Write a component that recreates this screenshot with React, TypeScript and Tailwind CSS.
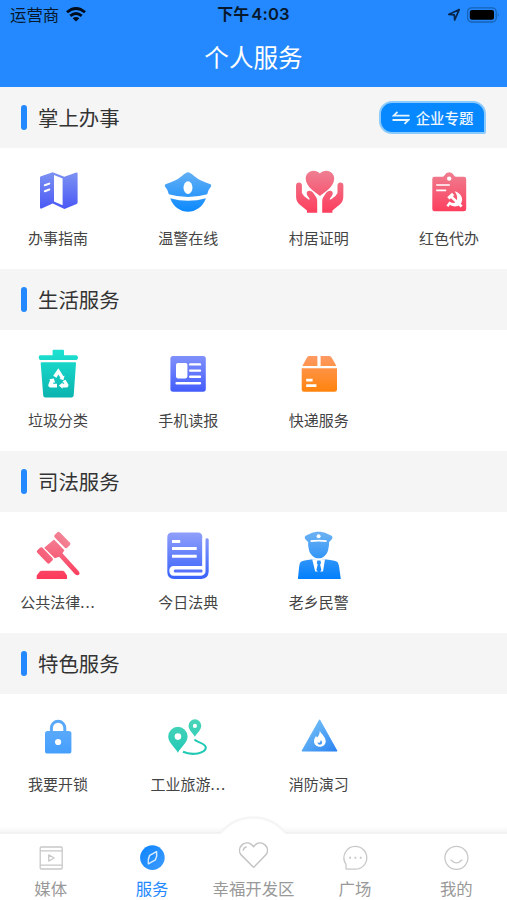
import React from "react";

type IconProps = {
  id: string;
  from: string;
  to: string;
  children: React.ReactNode;
};

// 48x48 tile icon, shapes inherit the vertical gradient fill
const Icon: React.FC<IconProps> = ({ id, from, to, children }) => (
  <svg viewBox="0 0 48 48" className="w-12 h-12 overflow-visible" fill={`url(#${id})`}>
    <defs>
      <linearGradient id={id} gradientUnits="userSpaceOnUse" x1="0" y1="2" x2="0" y2="46">
        <stop offset="0" stopColor={from} />
        <stop offset="1" stopColor={to} />
      </linearGradient>
    </defs>
    {children}
  </svg>
);

const GuideIcon = () => (
  <Icon id="guide" from="#8096f2" to="#4350f5">
    <path d="M7 8.3 18.7 4.3 30.3 8.7 42.3 4.6Q43.6 4.3 43.6 5.6V34.6Q43.6 35.6 42.6 36L30.5 41 18.7 35.5 7.6 40.6Q6 41 6 39.6V9.6Q6 8.6 7 8.3Z" />
    <path d="M20 7 28.6 10.4V37.2L20 33.4Z" fill="#fff" />
    <path d="M10.8 17.3 15.3 15.6M10.8 23.2 15.3 21.5" stroke="#fff" strokeWidth="2" strokeLinecap="round" />
  </Icon>
);

const PoliceCapIcon = () => (
  <Icon id="cap" from="#68b2f3" to="#0787ff">
    <path d="M24 4.3C27 4.5 31 9.5 36 12Q41 14.4 46.5 16.3Q47.8 17 47 18.6Q44 22 43.2 26.2Q24 31.8 4.8 26.2Q4 22 1 18.6Q.2 17 1.5 16.3Q7 14.4 12 12C17 9.5 21 4.5 24 4.3Z" />
    <path d="M6.2 30.2Q24 35.2 42 30.2C39 39 31 43.8 24 43.8S9 39 6.2 30.2Z" />
    <ellipse cx="24" cy="19.6" rx="4.5" ry="6.3" fill="#fff" />
  </Icon>
);

const HeartHandsIcon = () => (
  <Icon id="hands" from="#ee8093" to="#fd3c5c">
    <path d="M25 28C22 25 10.7 19.5 10.7 10.5C10.7 3 20 .2 24.9 5.5C29.8.2 39.2 3 39.2 10.5C39.2 19.5 28 25 25 28Z" />
    <path d="M1 17Q1.2 14.3 4 14.5Q6.9 14.8 6.9 17.5V25Q8.4 28 11.5 30L13.6 31.4Q15.4 32 14.4 30.4L12 27Q10.8 23.4 14 22.8Q16.4 22.6 18 24.6L21.2 29.3Q22.2 31 22.2 33V44.7H12V42.6L4.6 36.6Q1.2 33.8 1.1 29Z" />
    <path d="M48.4 17Q48.2 14.3 45.4 14.5Q42.5 14.8 42.5 17.5V25Q41 28 37.9 30L35.8 31.4Q34 32 35 30.4L37.4 27Q38.6 23.4 35.4 22.8Q33 22.6 31.4 24.6L28.2 29.3Q27.2 31 27.2 33V44.7H37.4V42.6L44.8 36.6Q48.2 33.8 48.3 29Z" />
  </Icon>
);

const PartyBoardIcon = () => (
  <Icon id="board" from="#ee8293" to="#fd3b5b">
    <path d="M9.5 8.7H17.5Q19.3 8.5 19.7 7A5 5 0 0 1 28.7 7Q29.2 8.5 31 8.7H38.8Q41.2 8.7 41.2 11V41Q41.2 43.3 38.8 43.3H9.7Q7.3 43.3 7.3 41V11Q7.3 8.7 9.5 8.7Z" />
    <circle cx="24.2" cy="10.6" r="2.2" fill="#fff" />
    <path d="M11.2 17H24.8M11.2 22.4H21.2" stroke="#fff" strokeWidth="1.7" />
    <path d="M29.6 23.2C36 24.5 39.6 31.5 35.2 36.6C32 39.4 27.4 38.6 25 36.8L23.4 39 21.4 37.4 24.3 33.6C27 35.6 30 35.4 31.4 33.2C33 30.2 32.2 26.3 29.6 23.2Z" fill="#fff" />
    <path d="M22.2 29.3 27 24.8 29.2 27.1 28 28.4 37.6 37.4 35.7 39.5 26 30.2 24.5 31.6Z" fill="#fff" />
  </Icon>
);

const TrashIcon = () => (
  <Icon id="trash" from="#1de0d0" to="#0bb5b0">
    <path d="M19.6-.2H29Q30-.2 30 .8V5.2H42.3Q44 5.4 44 7.6T42.3 10H6.3Q4.7 10 4.7 7.6T6.3 5.2H18.6V.8Q18.6-.2 19.6-.2Z" />
    <path d="M7.6 12.2H41.2Q42.2 12.2 42 13.4L39.7 45.6Q39.5 47.4 37.8 47.4H11Q9.4 47.4 9.2 45.6L6.7 13.4Q6.6 12.2 7.6 12.2Z" />
    <path d="M24.4 18.2 29.4 26.2 30.6 25.6 29.4 30.2 25.4 28.8 26.6 28 24.4 24.4 22.4 27.8 19.2 25.8Z" fill="#fff" />
    <path d="M31.4 29.8 34.4 34.6Q34.8 37.4 32.6 37.4H28.6V38.8L24.8 35.6 28.6 32.6V33.8H30.4L28.6 31.2Z" fill="#fff" />
    <path d="M16.2 30 15 29.2 19.8 28.4 21.2 32.8 19.8 32.2 19 33.8H23V37.4H16.4Q13.4 37 14.6 34Z" fill="#fff" />
  </Icon>
);

const NewsIcon = () => (
  <Icon id="news" from="#8796fa" to="#3c56fd">
    <rect x="6.4" y="6" width="35.4" height="35.7" rx="2.6" />
    <rect x="12" y="13" width="11.4" height="15.4" rx="1.8" fill="#fff" />
    <path d="M26.2 14.4H36M26.2 20.6H36M26.2 26.8H36M12.6 33.3H36" stroke="#fff" strokeWidth="2.4" strokeLinecap="round" />
  </Icon>
);

const ParcelIcon = () => (
  <Icon id="parcel" from="#ff9c6c" to="#ff8102">
    <path d="M14.2 6H22.4V16H7.4L12 7.6Q12.6 6 14.2 6ZM25.6 6H34.2Q35.8 6 36.6 7.6L41.4 16H25.6Z" />
    <path d="M6.7 18.2H42V39.6Q42 41.8 39.8 41.8H9Q6.7 41.8 6.7 39.6Z" />
    <path d="M11.2 30.2H17.6M11.2 35.7H21.4" stroke="#fff" strokeWidth="2.7" />
  </Icon>
);

const GavelIcon = () => (
  <Icon id="gavel" from="#f2889a" to="#fc395a">
    <rect x="19.4" y="4.4" width="17.8" height="7.2" rx="1.8" transform="rotate(46 28.3 8)" />
    <rect x="2" y="19.8" width="17.8" height="7.2" rx="1.8" transform="rotate(46 10.9 23.4)" />
    <path d="M20 7.4 30.4 18.2 28.4 21.2 44.3 38.7Q46.4 41.2 44.9 42.8Q43.2 44 40.8 41.9L25.2 24.8 20.8 26.2 10.2 15.8Z" />
    <path d="M7.6 38.7H28.4Q29.6 38.7 30.3 39.6L33 43.4V47H2.7V43.4L5.8 39.6Q6.5 38.7 7.6 38.7Z" />
  </Icon>
);

const BookIcon = () => (
  <Icon id="book" from="#8d9dfa" to="#3a63fb">
    <path d="M8 .4H33.6Q38.4.4 38.4 5.2V34H9Q5.5 34.6 5.3 38.4Q5.5 43.4 9.5 43.8H37Q41.4 43.6 41.4 38.6V7.6Q41.6 6.2 43 6.2T44.7 7.6V39.6Q44.4 46.6 37.4 47H10Q3.3 46.6 3.3 40V5.2Q3.3.4 8 .4Z" />
    <path d="M38.8 34.9H11.2Q7 35.2 7 39T11.2 42.8H38.8Z" fill="#fff" />
    <path d="M11.2 39H37.8" stroke="#5873f9" strokeWidth="3" strokeLinecap="round" />
    <path d="M39.8 5.5V41" stroke="#fff" strokeWidth="2.8" />
    <path d="M8 9.4H16.2M8 16.4H32.7M8 24.3H32.7" stroke="#fff" strokeWidth="3" />
  </Icon>
);

const OfficerIcon = () => (
  <Icon id="officer" from="#69b0f3" to="#0580fc">
    <path d="M23.6-.3C29.5-.2 32.5 1.8 36.2 3.5Q38.4 5 36.8 7.2L34 10.2C34.4 12 33.8 14 33.4 16.4C32.8 22 28.4 26.3 23.6 26.3S14.3 22 13.7 16.4C13.3 14 12.8 12 13.3 10.2L10.4 7.2Q8.8 5 11 3.5C14.7 1.8 17.7-.2 23.6-.3Z" />
    <path d="M15.6 9.2Q23.6 7.9 31.6 9.2" fill="none" stroke="#fff" strokeWidth="1.8" />
    <circle cx="23.6" cy="4.3" r="2" fill="#fff" />
    <path d="M16 27.6 20.4 27.3 23.6 38.6 27.2 27.3 31.5 27.6Q39.5 28.4 42 29.8Q43.7 31 44.3 36L45.8 47H2.9L4 36Q4.4 31 6 29.8Q8.5 28.4 16 27.6Z" />
    <path d="M17.2 27.2H30L28 39.6H20.2Z" fill="#fff" />
    <path d="M22.3 28.4H25.5L26 31.2 25.1 32.4 26.4 38 24 41 21.4 38 22.7 32.4 21.8 31.2Z" />
  </Icon>
);

const LockIcon = () => (
  <Icon id="lock" from="#68b0f8" to="#3f9cfe">
    <path d="M17.4 18V14A6.7 6.7 0 0 1 30.8 14V18" fill="none" stroke="#5aa9f8" strokeWidth="3" />
    <rect x="11" y="16.9" width="26.4" height="22.6" rx="2.6" />
    <circle cx="24.1" cy="28" r="3.1" fill="#fff" />
  </Icon>
);

const RouteIcon = () => (
  <Icon id="route" from="#4fd6b9" to="#1ac6b6">
    <path d="M13.9 38.7C11.4 33.6 4.2 28.8 4.2 22.5A9.7 9.7 0 0 1 23.6 22.5C23.6 28.8 16.4 33.6 13.9 38.7Z" />
    <circle cx="13.9" cy="22.6" r="3.3" fill="#fff" />
    <path d="M30.9 22.8C29.3 19.4 24.5 16 24.5 11.7A6.4 6.4 0 0 1 37.3 11.7C37.3 16 32.5 19.4 30.9 22.8Z" />
    <circle cx="30.9" cy="11.9" r="2.1" fill="#fff" />
    <path d="M30.6 25.4C32 28.5 41.8 28.8 41.8 33.6C41.8 39.5 28 41.8 19 37.8" fill="none" stroke="#20c9b3" strokeWidth="2.1" />
  </Icon>
);

const FireDrillIcon = () => (
  <svg viewBox="0 0 48 48" className="w-12 h-12">
    <defs>
      <linearGradient id="fire" x1="0" y1="0" x2="1" y2="1">
        <stop offset="0.2" stopColor="#6ebcf6" />
        <stop offset="1" stopColor="#2a82f2" />
      </linearGradient>
    </defs>
    <path d="M24.6 5.8 42 37H7Z" fill="url(#fire)" stroke="url(#fire)" strokeWidth="1" strokeLinejoin="round" />
    <path d="M24.8 16.4C25.6 19.6 30.7 22.5 30.7 27.3C30.7 30.6 28 32.8 24.9 32.8S19 30.6 19 27.3C19 24.8 20.2 23.3 21 22L22 23.6C23.8 21.6 24.8 19.6 24.8 16.4Z" fill="#fff" />
    <path d="M25.8 25.8C26 27 27.4 27.4 27.1 29Q26.7 30.8 24.8 30.8T22.4 28.6L24.4 28.8Q25.8 27.8 25.8 25.8Z" fill="#4799f3" />
  </svg>
);

const sections = [
  {
    title: "掌上办事",
    items: [
      { label: "办事指南", icon: <GuideIcon /> },
      { label: "温警在线", icon: <PoliceCapIcon /> },
      { label: "村居证明", icon: <HeartHandsIcon /> },
      { label: "红色代办", icon: <PartyBoardIcon /> },
    ],
  },
  {
    title: "生活服务",
    items: [
      { label: "垃圾分类", icon: <TrashIcon /> },
      { label: "手机读报", icon: <NewsIcon /> },
      { label: "快递服务", icon: <ParcelIcon /> },
    ],
  },
  {
    title: "司法服务",
    items: [
      { label: "公共法律", more: true, icon: <GavelIcon /> },
      { label: "今日法典", icon: <BookIcon /> },
      { label: "老乡民警", icon: <OfficerIcon /> },
    ],
  },
  {
    title: "特色服务",
    items: [
      { label: "我要开锁", icon: <LockIcon /> },
      { label: "工业旅游", more: true, icon: <RouteIcon /> },
      { label: "消防演习", icon: <FireDrillIcon /> },
    ],
  },
];

const tabs = [
  {
    label: "媒体",
    icon: (
      <svg viewBox="0 0 32 32" className="w-8 h-8" fill="none" stroke="#c8c8c8" strokeWidth="1.3">
        <rect x="5.2" y="5" width="22" height="22" rx="1" />
        <path d="M5.2 8.9H27.2M5.2 23.1H27.2" />
        <path d="M13.7 12.9V19.1L19.2 16Z" strokeLinejoin="round" />
      </svg>
    ),
  },
  {
    label: "服务",
    active: true,
    icon: (
      <svg viewBox="0 0 32 32" className="w-8 h-8" fill="none">
        <defs>
          <linearGradient id="compass" x1="0" y1="0" x2="1" y2="1">
            <stop offset="0" stopColor="#0c84ff" />
            <stop offset="1" stopColor="#3e9cff" />
          </linearGradient>
        </defs>
        <circle cx="16.4" cy="15.6" r="12.3" fill="url(#compass)" />
        <path d="M20.6 9.6Q21.4 14.1 19.4 17.9L12.4 21.8Q11.5 17.4 13.7 13.4Z" stroke="#d9ebff" strokeWidth="1.5" strokeLinejoin="round" />
      </svg>
    ),
  },
  {
    label: "幸福开发区",
    icon: (
      <svg viewBox="0 0 32 32" className="w-8 h-8 overflow-visible" fill="none" stroke="#c4c4c4" strokeWidth="1.5" strokeLinejoin="round" strokeLinecap="round">
        <path d="M15.9 24.8 3.9 12.6A7.4 7.4 0 0 1 14.2 2.3L16.5 4.6 18.8 2.3A7.4 7.4 0 0 1 29.1 12.6L17.3 24.8Q16.6 25.4 15.9 24.8Z" />
        <path d="M6.2 8Q6.8 5.6 9.2 5" />
      </svg>
    ),
  },
  {
    label: "广场",
    icon: (
      <svg viewBox="0 0 32 32" className="w-8 h-8" fill="none" stroke="#c8c8c8" strokeWidth="1.3">
        <path d="M16.4 4.4A11.4 11.4 0 1 1 16.4 27.2H7.8Q7 27.2 7 26.4V22.3A11.4 11.4 0 0 1 16.4 4.4Z" />
        <path d="M10.2 15.8H12M15.5 15.8H17.3M20.8 15.8H22.6" strokeWidth="1.9" />
      </svg>
    ),
  },
  {
    label: "我的",
    icon: (
      <svg viewBox="0 0 32 32" className="w-8 h-8" fill="none" stroke="#c8c8c8" strokeWidth="1.3">
        <circle cx="16.4" cy="15.8" r="11.5" />
        <path d="M11 18Q16.4 23.8 21.8 18" strokeLinecap="round" />
      </svg>
    ),
  },
];

const StatusBar = () => (
  <div className="h-[29px] grid grid-cols-3 items-center pl-[10px] pr-[7px] text-[#07182c]">
    <div className="flex items-center gap-[7px] text-[16.4px] leading-7">
      <span className="-mt-[2px]">运营商</span>
      <svg viewBox="0 0 20 15" className="w-5 h-[15px]" fill="none" stroke="#000c1c" strokeWidth="2.8">
        <path d="M1 5.3Q10-2.4 19 5.3M4.3 8.9Q10 4 15.7 8.9" />
        <path d="M10 14.4 6.6 11.2Q10 8.6 13.4 11.2Z" fill="#000c1c" stroke="none" />
      </svg>
    </div>
    <div className="-mt-[2px] -ml-[3px] text-center text-[16px] font-bold leading-7 whitespace-nowrap">
      下午<span className="ml-[2px] font-['Inter'] font-semibold text-[16.6px] tracking-[0.2px]">4:03</span>
    </div>
    <div className="flex items-center justify-end gap-[5px]">
      <svg viewBox="0 0 14 14" className="w-[14px] h-[14px]" fill="none" stroke="#08254a" strokeWidth="1.7" strokeLinejoin="round">
        <path d="M1.8 6.4 12.2 1.6 7.7 12 7.3 6.8Z" />
      </svg>
      <svg viewBox="0 0 34 16" className="w-[34px] h-4">
        <rect x="1.6" y="0.8" width="28.6" height="14.2" rx="4" fill="none" stroke="#1763b8" strokeWidth="1.3" />
        <rect x="3.8" y="3" width="24.2" height="9.8" rx="2" fill="#000" />
        <path d="M31.8 5.5Q33.6 7.8 31.8 10.2Z" fill="#1763b8" />
      </svg>
    </div>
  </div>
);

const App: React.FC = () => {
  return (
    <div className="w-full h-[900px] flex flex-col bg-white overflow-hidden font-['Noto_Sans_CJK_SC','Noto_Sans',sans-serif]">
      {/* Header */}
      <header className="h-[87px] shrink-0 bg-[#2489ff]">
        <StatusBar />
        <h1 className="text-center text-white text-[24.6px] leading-[54px]">个人服务</h1>
      </header>

      {/* Service sections */}
      <main className="flex-1 min-h-0">
        {sections.map((section, index) => (
          <section key={section.title} className="h-[182px]">
            <div className="h-[61px] flex items-center justify-between bg-[#f5f5f5] pl-[21px] pr-[21px]">
              <div className="flex items-center gap-[11px]">
                <span className="w-[6px] h-[25px] rounded-full bg-[#2489ff]" />
                <h2 className="-mt-[2px] text-[20.4px] leading-[30px] text-[#333]">{section.title}</h2>
              </div>
              {index === 0 && (
                <button className="w-[107px] h-[33px] flex items-center justify-center gap-[6px] rounded-[13px] rounded-br-[2px] border-2 border-[#8bcafc] bg-[#0888ff] text-[#eef7ff]">
                  <svg viewBox="0 0 18 14" className="w-[18px] h-[14px]" fill="none" stroke="#e6f4ff" strokeWidth="1.8">
                    <path d="M5.5.8 1.6 4.6H17.5M.5 9H16.4L12.5 12.8" />
                  </svg>
                  <span className="text-[14.4px] font-medium leading-5">企业专题</span>
                </button>
              )}
            </div>
            <div className="grid grid-cols-[repeat(4,88px)] justify-between px-[14px] pt-5">
              {section.items.map((item) => (
                <div key={item.label} className="flex flex-col items-center gap-3">
                  {item.icon}
                  <span className="text-[15px] leading-5 text-[#444] whitespace-nowrap">
                    {item.label}
                    {item.more && <span className="tracking-[1px]">...</span>}
                  </span>
                </div>
              ))}
            </div>
          </section>
        ))}
      </main>

      {/* Bottom tabs */}
      <nav className="relative h-[67px] shrink-0 bg-white">
        <svg viewBox="0 0 507 24" className="absolute left-0 -top-5 w-full h-6" fill="none">
          <defs>
            <linearGradient id="shade" x1="0" y1="0" x2="0" y2="1">
              <stop offset="0" stopColor="#000" stopOpacity="0" />
              <stop offset="1" stopColor="#000" stopOpacity="0.04" />
            </linearGradient>
          </defs>
          <path d="M0 13H507V20H0Z" fill="url(#shade)" />
          <path d="M0 24V20H221C228 12 239 5 253 5S278 12 285 20H507V24Z" fill="#fff" />
          <path d="M221 19.5C228 11 239 4.5 253 4.5S278 11 285 19.5" stroke="#f5f5f5" strokeWidth="2.6" />
          <path d="M0 20H221M285 20H507" stroke="#f0f0f0" strokeWidth="1.5" />
        </svg>
        <div className="relative grid grid-cols-5 pt-[9px]">
          {tabs.map((tab) => (
            <div key={tab.label} className="flex flex-col items-center gap-1">
              {tab.icon}
              <span
                className={`text-[16.4px] leading-5 whitespace-nowrap ${
                  tab.active ? "text-[#2489ff]" : "text-[#999]"
                }`}
              >
                {tab.label}
              </span>
            </div>
          ))}
        </div>
      </nav>
    </div>
  );
};

export default App;
